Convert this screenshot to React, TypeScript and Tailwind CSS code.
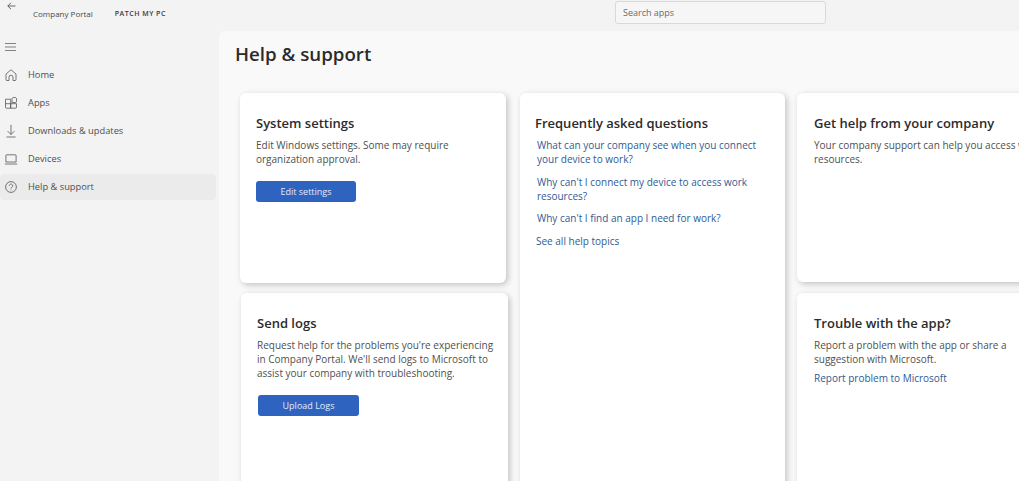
import React from 'react';

const NavIcon = ({ children }: { children: React.ReactNode }) => (
  <svg width="14" height="14" viewBox="0 0 14 14" fill="none" stroke="#555" strokeWidth="0.8" className="shrink-0">
    {children}
  </svg>
);

const navItems = [
  {
    label: 'Home',
    icon: <path d="M2 6 7 1.8 12 6v5.6a.9.9 0 0 1-.9.9H9V9.2a2 2 0 0 0-4 0v3.3H2.9a.9.9 0 0 1-.9-.9z" />,
  },
  {
    label: 'Apps',
    icon: (
      <>
        <path d="M1.5 3.2h5.2v9H2.5a1 1 0 0 1-1-1zM6.7 7.7h-5.2M6.7 7.7h5.8v3.5a1 1 0 0 1-1 1H6.7z" />
        <path d="M8 3.2c0-1 .5-1.7 1.2-1.7h2c.8 0 1.3.6 1.3 1.5v2.5c0 .6-.4 1-1 1H8z" />
      </>
    ),
  },
  {
    label: 'Downloads & updates',
    icon: <path d="M7 .8v9.7M3.6 7.1 7 10.5l3.4-3.4M2.4 13h9.2" />,
  },
  {
    label: 'Devices',
    icon: <path d="M2.6 2.8h8.8a.7.7 0 0 1 .7.7V10H1.9V3.5a.7.7 0 0 1 .7-.7zM.8 12h12.4" />,
  },
  {
    label: 'Help & support',
    active: true,
    icon: (
      <>
        <circle cx="7" cy="7" r="5.4" />
        <path d="M5.3 5.7a1.7 1.7 0 1 1 2.6 1.5c-.6.4-.9.7-.9 1.3" />
        <path d="M7 9.6v.7" />
      </>
    ),
  },
];

const Card = ({ title, className, children }: { title: string; className: string; children?: React.ReactNode }) => (
  <section className={`rounded-md bg-white shadow-[2px_2px_6px_rgba(0,0,0,0.22)] ${className}`}>
    <h2 className="whitespace-nowrap text-[13px] font-semibold leading-[20px] text-[#2b2b2b]">{title}</h2>
    {children}
  </section>
);

const Body = ({ children }: { children: React.ReactNode }) => (
  <p className="mt-[5px] whitespace-nowrap text-[10px] leading-[14px] text-[#4f4f4f]">{children}</p>
);

const Action = ({ label, className }: { label: string; className: string }) => (
  <button className={`flex h-[21px] items-center justify-center rounded-[3px] bg-[#2f63c0] text-[9px] text-[#e3ecfa] ${className}`}>
    {label}
  </button>
);

const FaqLink = ({ children, className = '' }: { children: React.ReactNode; className?: string }) => (
  <a className={`block whitespace-nowrap text-[10px] leading-[14px] text-[#2f5a94] ${className}`}>{children}</a>
);

export default function App() {
  return (
    <div className="h-[481px] w-[1024px] overflow-hidden bg-white">
      <div className="flex h-full w-[1019px] flex-col overflow-hidden bg-[#f3f3f3] font-['Open_Sans',sans-serif]">
        {/* Title bar */}
        <header className="relative flex h-[31px] shrink-0 items-center pl-[33px]">
          <svg width="9" height="8" viewBox="0 0 9 8" fill="none" stroke="#444" strokeWidth="0.8" className="absolute left-[7px] top-[2px]">
            <path d="M8.5 4H.8M4 .8.8 4 4 7.2" />
          </svg>
          <span className="mb-[3px] text-[8px] text-[#4a4a4a]">Company Portal</span>
          <span className="mb-[3px] ml-[22px] text-[7px] font-semibold tracking-[0.5px] text-[#3a3a3a]">PATCH MY PC</span>
          <div className="absolute left-[615px] top-px flex h-[23px] w-[211px] items-center rounded-[3px] border border-[#d9d9d9] bg-[#f6f6f6] pl-[7px] text-[9px] text-[#6b6b6b]">
            Search apps
          </div>
        </header>

        <div className="flex min-h-0 flex-1">
          {/* Sidebar */}
          <nav className="w-[219px] shrink-0">
            <div className="flex h-[31px] items-center pl-[5px]">
              <svg width="12" height="8" viewBox="0 0 12 8" fill="none" stroke="#666" strokeWidth="0.8">
                <path d="M0 .5h11M0 4h11M0 7.5h11" />
              </svg>
            </div>
            <ul className="flex flex-col">
              {navItems.map((item) => (
                <li
                  key={item.label}
                  className={`mr-[3px] flex h-[26px] items-center gap-[10px] rounded-[4px] pl-[4px] text-[9.3px] text-[#4f4f4f] [&:not(:first-child)]:mt-[2px] ${
                    item.active ? 'bg-[#ebebeb]' : ''
                  }`}
                >
                  <NavIcon>{item.icon}</NavIcon>
                  <span>{item.label}</span>
                </li>
              ))}
            </ul>
          </nav>

          {/* Main panel */}
          <main className="min-w-0 flex-1 overflow-hidden rounded-tl-md bg-[#f9f9f9] pl-[16px]">
            <h1 className="mt-[9px] text-[18.7px] font-semibold leading-[28px] text-[#2b2b2b]">Help &amp; support</h1>
            <div className="mt-[25px] flex items-start">
              <div className="ml-[5px] flex w-[268px] shrink-0 flex-col gap-[10px]">
                <Card title="System settings" className="h-[190px] w-[266px] px-[16px] pt-[20px]">
                  <Body>
                    Edit Windows settings. Some may require
                    <br />
                    organization approval.
                  </Body>
                  <Action label="Edit settings" className="mt-[15px] w-[100px]" />
                </Card>
                <Card title="Send logs" className="ml-px h-[220px] w-[267px] px-[16px] pt-[20px]">
                  <Body>
                    Request help for the problems you're experiencing
                    <br />
                    in Company Portal. We'll send logs to Microsoft to
                    <br />
                    assist your company with troubleshooting.
                  </Body>
                  <Action label="Upload Logs" className="ml-px mt-[15px] w-[101px]" />
                </Card>
              </div>
              <Card title="Frequently asked questions" className="ml-[12px] h-[420px] w-[265px] shrink-0 px-[15px] pt-[20px]">
                <FaqLink className="ml-[2px] mt-[5px]">
                  What can your company see when you connect
                  <br />
                  your device to work?
                </FaqLink>
                <FaqLink className="ml-[2px] mt-[9px]">
                  Why can't I connect my device to access work
                  <br />
                  resources?
                </FaqLink>
                <FaqLink className="ml-[2px] mt-[8px]">Why can't I find an app I need for work?</FaqLink>
                <FaqLink className="ml-px mt-[9px]">See all help topics</FaqLink>
              </Card>
              <div className="ml-[12px] flex w-[300px] shrink-0 flex-col gap-[11px]">
                <Card title="Get help from your company" className="h-[189px] px-[17px] pt-[20px]">
                  <Body>
                    Your company support can help you access work
                    <br />
                    resources.
                  </Body>
                </Card>
                <Card title="Trouble with the app?" className="h-[220px] px-[17px] pt-[20px]">
                  <Body>
                    Report a problem with the app or share a
                    <br />
                    suggestion with Microsoft.
                  </Body>
                  <FaqLink className="mt-[5px]">Report problem to Microsoft</FaqLink>
                </Card>
              </div>
            </div>
          </main>
        </div>
      </div>
    </div>
  );
}
